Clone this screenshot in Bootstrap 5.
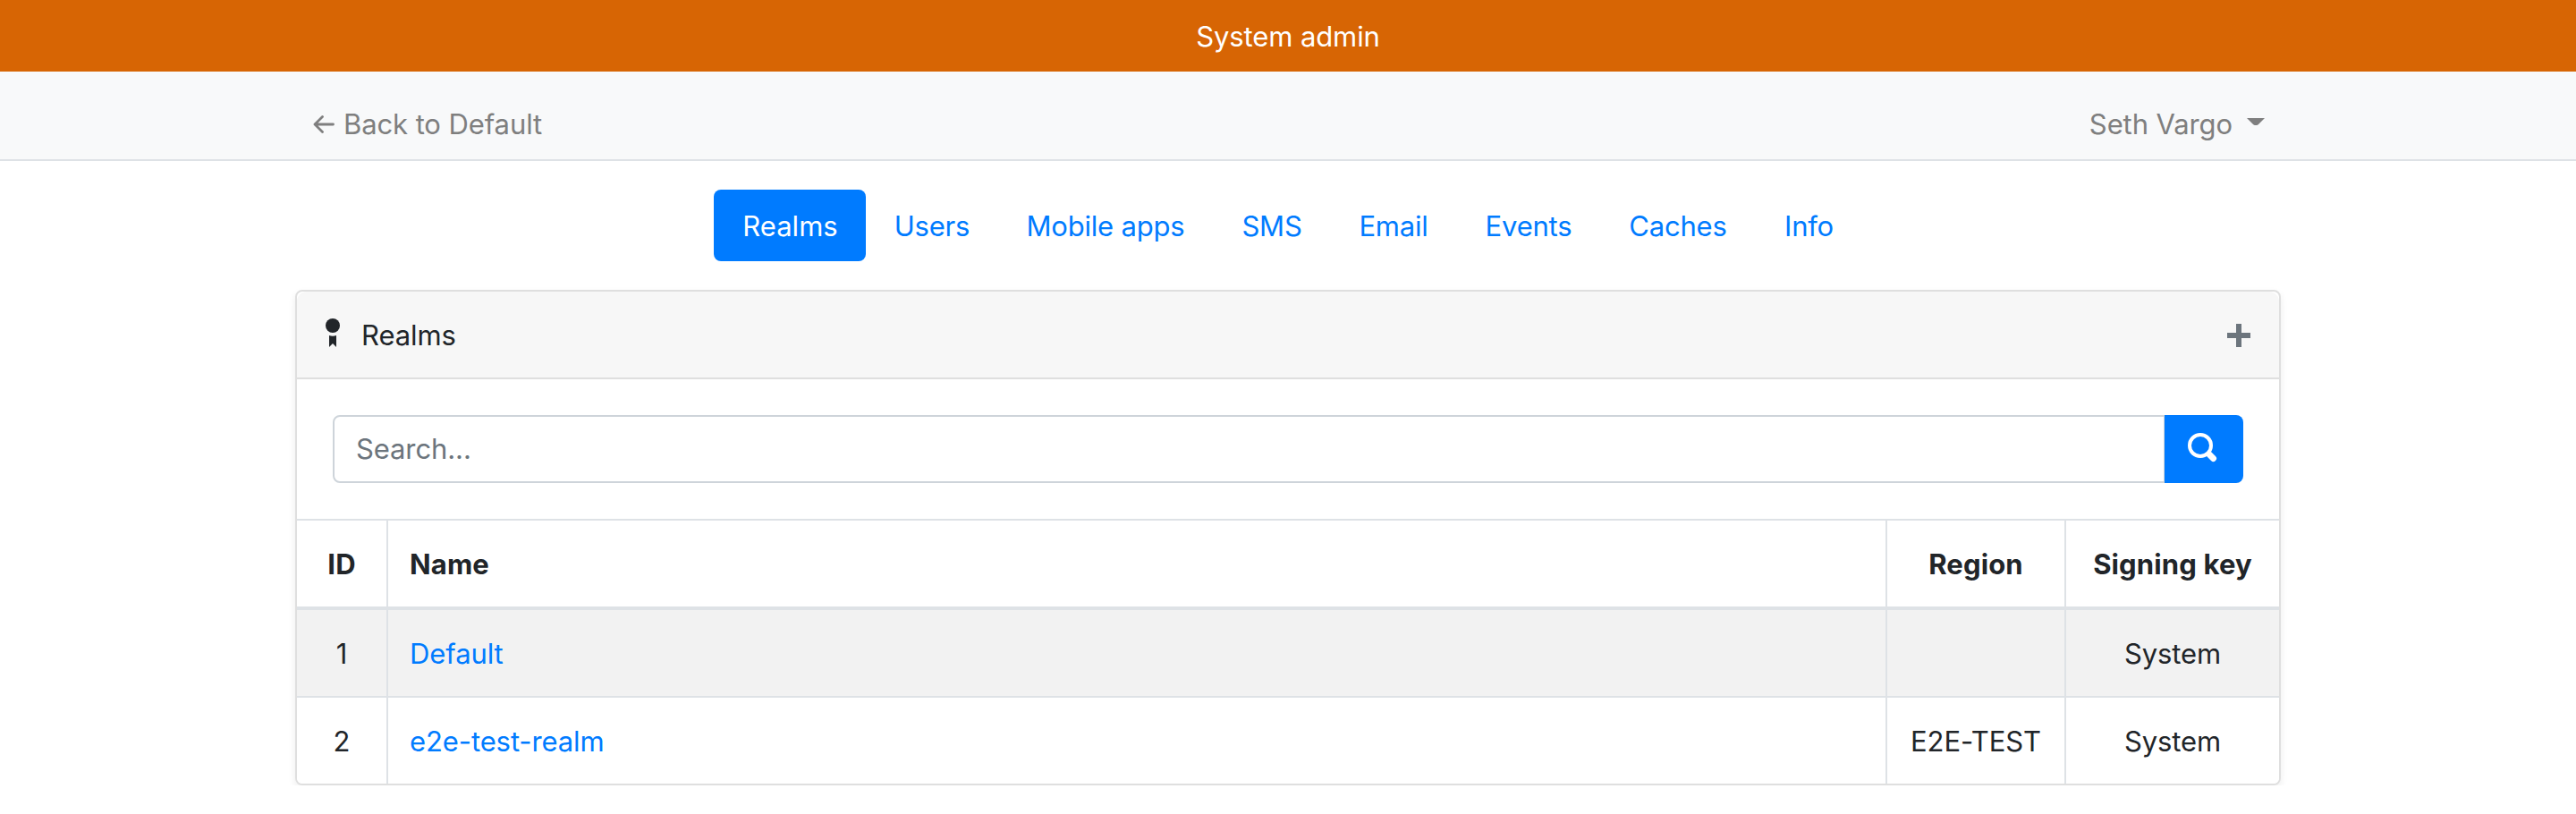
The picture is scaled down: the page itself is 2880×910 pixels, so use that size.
<!DOCTYPE html>
<html lang="en">
<head>
<meta charset="utf-8">
<title>System admin - Realms</title>
<link rel="stylesheet" href="https://cdn.jsdelivr.net/npm/bootstrap@5.3.0/dist/css/bootstrap.min.css">
<style>
html { font-size: 32px; }
body { font-family: Inter, "Liberation Sans", sans-serif; font-size: 31px; line-height: 48px; color: #212529; background: #fff; letter-spacing: -.1px; }
a { color: #007bff; text-decoration: none; }
svg { display: block; flex: none; }
.admin-banner { background: #d76504; height: 80px; padding-top: 17px; }
.top-bar { background: #f8f9fa; height: 100px; border-bottom: 2px solid #dee2e6; }
.page-wrap { width: 2220px; margin: 0 auto; }
.top-bar a { color: #7f7f7f; }
.top-bar .page-wrap { padding: 35px 18px 0 20px; }
.back-arrow { margin: 14px 10px 0 0; }
.user-caret { margin: 17px 0 0 16px; }
.nav-pills { margin: 32px 0; --bs-nav-pills-link-active-bg: #007bff; --bs-nav-link-color: #007bff; }
.nav-pills .nav-link { font-size: 31px; padding: 17px 0 15px 1px; border-radius: 8px; text-align: center; white-space: nowrap; letter-spacing: -.2px; }
.nav-pills .nav-link.active { letter-spacing: 0; }
.nav-item:nth-child(1) { width: 170px; }
.nav-item:nth-child(2) { width: 147px; }
.nav-item:nth-child(3) { width: 241px; }
.nav-item:nth-child(4) { width: 131px; }
.nav-item:nth-child(5) { width: 141px; }
.nav-item:nth-child(6) { width: 161px; }
.nav-item:nth-child(7) { width: 173px; }
.nav-item:nth-child(8) { width: 120px; }
.realm-card { border: 2px solid #dfdfdf; border-radius: 8px; box-shadow: 0 4px 8px rgba(0,0,0,.075); overflow: hidden; }
.realm-card .card-header { background: #f7f7f7; border-bottom: 2px solid #dfdfdf; height: 98px; padding: 2px 32px 0; }
.realm-icon { margin: 0 24px 6px 0; }
.search-area { padding: 40px; height: 156px; }
.search-area .form-control { height: 76px; font-size: 31px; padding: 11px 24px 13px; border: 2px solid #ced4da; border-radius: 8px 0 0 8px; letter-spacing: inherit; }
.search-area .form-control::placeholder { color: #6c757d; }
.search-area .btn { width: 88px; height: 76px; padding: 0 0 3px 26px; background: #007bff; border: 0; border-radius: 0 8px 8px 0; }
.realm-table { table-layout: fixed; border-collapse: separate; border-spacing: 0; color: #212529; }
.realm-table > :not(caption) > * > * { height: 98px; padding: 2px 24px 0; border: 0 solid #dee2e6; border-top-width: 2px; border-left-width: 2px; box-shadow: none; background: #fff; vertical-align: middle; color: #212529; }
.realm-table tr > :first-child { border-left: 0; }
.realm-table thead th { border-bottom-width: 2px; height: 100px; letter-spacing: .15px; }
.realm-table tbody tr:first-child td { background: #f2f2f2; }
.realm-table tr > :last-child, .realm-table tr > :nth-child(3) { padding-left: 0; padding-right: 0; }
.id-col { width: 100px; }
.region-col { width: 200px; }
.key-col { width: 240px; }
</style>
</head>
<body>
<div class="admin-banner text-white text-center">System admin</div>
<header class="top-bar">
  <div class="page-wrap d-flex justify-content-between">
    <a href="#" class="d-flex"><svg class="back-arrow" width="24" height="20" viewBox="0 0 24 20" fill="none" stroke="currentColor" stroke-width="2.8" stroke-linecap="round" stroke-linejoin="round"><path d="M10.500 1.500 2 10l8.500 8.500M2 10h20.500"/></svg><span>Back to Default</span></a>
    <a href="#" class="d-flex"><span>Seth Vargo</span><svg class="user-caret" width="20" height="8" viewBox="0 0 20 8"><path d="M0 0h20l-7 7q-1 1-2 1H9q-1 0-2-1z" fill="currentColor"/></svg></a>
  </div>
</header>
<main class="page-wrap">
  <ul class="nav nav-pills justify-content-center">
    <li class="nav-item"><a class="nav-link active" href="#">Realms</a></li>
    <li class="nav-item"><a class="nav-link" href="#">Users</a></li>
    <li class="nav-item"><a class="nav-link" href="#">Mobile apps</a></li>
    <li class="nav-item"><a class="nav-link" href="#">SMS</a></li>
    <li class="nav-item"><a class="nav-link" href="#">Email</a></li>
    <li class="nav-item"><a class="nav-link" href="#">Events</a></li>
    <li class="nav-item"><a class="nav-link" href="#">Caches</a></li>
    <li class="nav-item"><a class="nav-link" href="#">Info</a></li>
  </ul>
  <div class="card realm-card">
    <div class="card-header d-flex align-items-center justify-content-between">
      <div class="d-flex align-items-center"><svg class="realm-icon" width="16" height="32" viewBox="0 0 16 32" fill="currentColor"><circle cx="8" cy="8" r="8"/><path d="M4 19q4 1.500 8 0v13l-4-4-4 4z"/></svg><span>Realms</span></div>
      <a href="#" aria-label="New realm"><svg width="26" height="26" viewBox="0 0 26 26" fill="#6c757d"><path d="M10 0h6v10h10v6H16v10h-6V16H0v-6h10z"/></svg></a>
    </div>
    <form class="search-area">
      <div class="input-group flex-nowrap">
        <input class="form-control" type="text" placeholder="Search...">
        <button class="btn" type="button" aria-label="Search"><svg width="33" height="33" viewBox="0 0 33 33" fill="none" stroke="#fff"><circle cx="14" cy="14" r="12" stroke-width="4"/><path d="m24 24 4.500 4.500" stroke-width="7" stroke-linecap="round"/></svg></button>
      </div>
    </form>
    <table class="table realm-table mb-0">
      <colgroup><col class="id-col"><col><col class="region-col"><col class="key-col"></colgroup>
      <thead><tr><th class="text-center">ID</th><th>Name</th><th class="text-center">Region</th><th class="text-center">Signing key</th></tr></thead>
      <tbody>
        <tr><td class="text-center">1</td><td><a href="#">Default</a></td><td></td><td class="text-center">System</td></tr>
        <tr><td class="text-center">2</td><td><a href="#">e2e-test-realm</a></td><td class="text-center">E2E-TEST</td><td class="text-center">System</td></tr>
      </tbody>
    </table>
  </div>
</main>
<script src="https://cdn.jsdelivr.net/npm/bootstrap@5.3.0/dist/js/bootstrap.bundle.min.js"></script>
</body>
</html>
